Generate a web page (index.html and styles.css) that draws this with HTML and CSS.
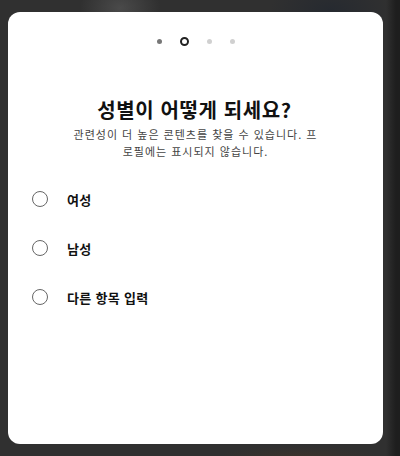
FILE: index.html
```html
<!DOCTYPE html>
<html lang="ko">
<head>
<meta charset="utf-8">
<link rel="stylesheet" href="styles.css">
</head>
<body>
<div class="backdrop">
  <div class="card">
    <div class="steps">
      <span class="step done"></span>
      <span class="step current"></span>
      <span class="step"></span>
      <span class="step"></span>
    </div>
    <h1 class="title">성별이 어떻게 되세요?</h1>
    <p class="desc">관련성이 더 높은 콘텐츠를 찾을 수 있습니다. 프로필에는 표시되지 않습니다.</p>
    <ul class="options">
      <li class="option"><span class="radio"></span><span class="label">여성</span></li>
      <li class="option"><span class="radio"></span><span class="label">남성</span></li>
      <li class="option"><span class="radio"></span><span class="label">다른 항목 입력</span></li>
    </ul>
  </div>
</div>
</body>
</html>
```

FILE: styles.css
```css
html, body {
  margin: 0;
  height: 100%;
}
body {
  font-family: "Noto Sans CJK KR", "Noto Sans", sans-serif;
  background: #303030;
}
.backdrop {
  height: 456px;
  box-sizing: border-box;
  padding: 12px 17px 12px 8px;
  background:
    linear-gradient(90deg, transparent 0, transparent 386px, #1e1e1e 396px, #1e1e1e 400px),
    radial-gradient(ellipse 40px 30px at 120px 8px, #4a4a4a, transparent),
    radial-gradient(ellipse 60px 30px at 330px 10px, #262a30, transparent),
    radial-gradient(ellipse 80px 10px at 300px 456px, #3a322c, transparent),
    #303030;
}
.card {
  height: 432px;
  background: #fff;
  border-radius: 12px;
  display: flex;
  flex-direction: column;
}
.steps {
  display: flex;
  justify-content: center;
  align-items: center;
  padding-top: 25px;
  height: 8px;
}
.step {
  width: 5px;
  height: 5px;
  border-radius: 50%;
  background: #d0d0d0;
  margin: 0 9px;
}
.step.done {
  background: #777;
}
.step.current {
  width: 5px;
  height: 5px;
  background: #fff;
  border: 2px solid #222;
}
.title {
  margin: 51px 0 0;
  text-align: center;
  font-size: 20px;
  line-height: 28px;
  font-weight: 700;
  color: #111;
  letter-spacing: 0.6px;
  padding-right: 2px;
}
.desc {
  margin: 2px auto 0;
  width: 248px;
  text-align: center;
  font-size: 11px;
  line-height: 17px;
  color: #444;
  letter-spacing: 1px;
  word-break: break-all;
}
.options {
  list-style: none;
  margin: 27px 0 0;
  padding: 0 0 0 24px;
  display: flex;
  flex-direction: column;
  gap: 25px;
}
.option {
  display: flex;
  align-items: center;
  height: 24px;
}
.radio {
  width: 14px;
  height: 14px;
  border: 1.5px solid #666;
  border-radius: 50%;
  flex: none;
}
.label {
  margin-left: 19px;
  font-size: 13px;
  font-weight: 700;
  color: #111;
  letter-spacing: 0.3px;
}
```
